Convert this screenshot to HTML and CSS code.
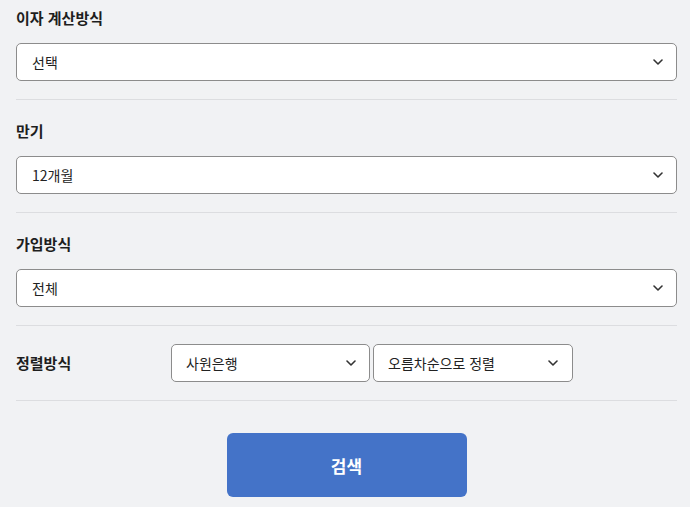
FILE: index.html
```html
<!DOCTYPE html>
<html lang="ko">
<head>
<meta charset="utf-8">
<title>검색 조건</title>
<link rel="stylesheet" href="styles.css">
</head>
<body>
<div class="form">
  <section class="field field-first">
    <h3 class="label">이자 계산방식</h3>
    <div class="select">
      <span class="value">선택</span>
      <svg class="chev" width="10" height="6" viewBox="0 0 10 6"><path d="M1 1l4 4 4-4" fill="none" stroke="#333" stroke-width="1.6" stroke-linecap="round" stroke-linejoin="round"/></svg>
    </div>
  </section>
  <section class="field">
    <h3 class="label">만기</h3>
    <div class="select">
      <span class="value">12개월</span>
      <svg class="chev" width="10" height="6" viewBox="0 0 10 6"><path d="M1 1l4 4 4-4" fill="none" stroke="#333" stroke-width="1.6" stroke-linecap="round" stroke-linejoin="round"/></svg>
    </div>
  </section>
  <section class="field">
    <h3 class="label">가입방식</h3>
    <div class="select">
      <span class="value">전체</span>
      <svg class="chev" width="10" height="6" viewBox="0 0 10 6"><path d="M1 1l4 4 4-4" fill="none" stroke="#333" stroke-width="1.6" stroke-linecap="round" stroke-linejoin="round"/></svg>
    </div>
  </section>
  <section class="field field-row">
    <h3 class="label row-label">정렬방식</h3>
    <div class="row-selects">
      <div class="select select-small">
        <span class="value">사원은행</span>
        <svg class="chev" width="10" height="6" viewBox="0 0 10 6"><path d="M1 1l4 4 4-4" fill="none" stroke="#333" stroke-width="1.6" stroke-linecap="round" stroke-linejoin="round"/></svg>
      </div>
      <div class="select select-small select-wide">
        <span class="value">오름차순으로 정렬</span>
        <svg class="chev" width="10" height="6" viewBox="0 0 10 6"><path d="M1 1l4 4 4-4" fill="none" stroke="#333" stroke-width="1.6" stroke-linecap="round" stroke-linejoin="round"/></svg>
      </div>
    </div>
  </section>
  <div class="actions">
    <button class="btn-search" type="button">검색</button>
  </div>
</div>
</body>
</html>
```

FILE: styles.css
```css
* { box-sizing: border-box; }

html, body {
  margin: 0;
  background: #f1f2f4;
}

body {
  font-family: "Noto Sans CJK KR", "Noto Sans", sans-serif;
  color: #222;
}

.form {
  padding: 0 13px 0 16px;
}

.field {
  padding: 20px 0 18px;
  border-bottom: 1px solid #dcdde0;
}

.field-first {
  padding-top: 7px;
}

.label {
  margin: 0 0 14px;
  font-size: 15px;
  line-height: 22px;
  font-weight: 700;
  color: #1e1e1e;
}

.select {
  height: 38px;
  display: flex;
  align-items: center;
  justify-content: space-between;
  padding: 0 13px 0 15px;
  background: #fff;
  border: 1px solid #8c8c8c;
  border-radius: 5px;
  font-size: 14px;
  color: #222;
}

.value {
  line-height: 20px;
}

.chev {
  display: block;
  flex: none;
}

.field-row {
  display: flex;
  align-items: center;
  padding-top: 18px;
}

.row-label {
  margin: 0;
  width: 155px;
  flex: none;
}

.row-selects {
  display: flex;
  gap: 3px;
}

.select-small {
  width: 199px;
  padding: 0 13px 0 14px;
}

.select-wide {
  width: 200px;
  padding-right: 14px;
}

.actions {
  display: flex;
  justify-content: center;
  padding-top: 32px;
}

.btn-search {
  width: 240px;
  height: 64px;
  border: 0;
  border-radius: 6px;
  background: #4473c8;
  color: #fff;
  font-family: "Noto Sans CJK KR", "Noto Sans", sans-serif;
  font-size: 17px;
  font-weight: 700;
}
```
